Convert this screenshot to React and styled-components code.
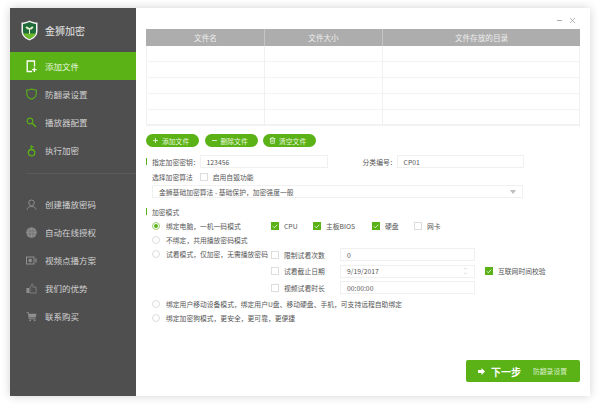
import React from 'react';
import styled, { createGlobalStyle } from 'styled-components';
import { Check, ChevronDown, ChevronUp, Minus, Plus, Trash2, X } from 'lucide-react';

const green = '#5ab217';
const font = '"Noto Sans CJK SC", "Liberation Sans", sans-serif';

const GlobalStyle = createGlobalStyle`
  html, body { margin: 0; padding: 0; background: #fff; }
  * { box-sizing: border-box; }
  body { font-family: ${font}; color: #555; }
`;

const Page = styled.div`
  width: 600px;
  height: 408px;
  padding: 8px 10px 12px;
  overflow: hidden;
`;

const Win = styled.div`
  display: flex;
  height: 100%;
  background: #fff;
  box-shadow: 0 0 9px rgba(0, 0, 0, 0.18);
`;

const Side = styled.aside`
  width: 126px;
  flex: none;
  background: #4f4f4f;
  display: flex;
  flex-direction: column;
`;

const Brand = styled.div`
  height: 44px;
  display: flex;
  align-items: center;
  gap: 7px;
  padding-left: 11px;
  color: #e4e4e4;
  font-size: 10px;
`;

const NavItem = styled.div`
  height: 28px;
  display: flex;
  align-items: center;
  padding-left: 16px;
  gap: 8px;
  font-size: 8.5px;
  color: ${(p) => (p.$active ? '#e9f5de' : '#d2d2d2')};
  background: ${(p) => (p.$active ? green : 'transparent')};
`;

const IconBox = styled.span`
  width: 11px;
  height: 14px;
  display: flex;
  align-items: center;
  justify-content: center;
  flex: none;
`;

const Divider = styled.div`
  height: 1px;
  margin: 9px 0 16px 16px;
  background: #5a5a5a;
`;

const Main = styled.main`
  flex: 1;
  display: flex;
  flex-direction: column;
  padding: 0 10px 14px;
  min-width: 0;
`;

const TitleBar = styled.div`
  height: 21px;
  display: flex;
  justify-content: flex-end;
  align-items: center;
  gap: 5px;
  padding: 3px 3px 0 0;
  color: #8a8a8a;
`;

const Table = styled.div`
  display: grid;
  grid-template-columns: 118px 118px 198px;
  grid-template-rows: 17px repeat(5, 16px);
  height: 96px;
  border-bottom: 1px solid #f0f0f0;
`;

const Th = styled.div`
  background: #adadad;
  color: #eee;
  font-size: 7.6px;
  display: flex;
  align-items: center;
  justify-content: center;
  border-left: 1px solid ${(p) => (p.$first ? '#adadad' : '#c4c4c4')};
`;

const Td = styled.div`
  border-left: 1px solid #f0f0f0;
  border-bottom: 1px solid #f3f3f3;
  &:nth-child(3n) { border-right: 1px solid #f0f0f0; }
`;

const Actions = styled.div`
  display: flex;
  gap: 5.5px;
  margin-top: 9px;
`;

const Pill = styled.div`
  width: 53px;
  height: 13px;
  border-radius: 7px;
  background: ${green};
  color: #eaf6df;
  font-size: 6.8px;
  display: flex;
  align-items: center;
  gap: 3px;
  padding-left: 6px;
`;

const FormRow = styled.div`
  display: flex;
  align-items: center;
  height: 13px;
  font-size: 6.8px;
  margin-top: ${(p) => p.$top || 0}px;
  padding-left: ${(p) => p.$pad || 0}px;
`;

const Mark = styled.span`
  width: 1px;
  height: 7px;
  background: ${green};
  margin-right: 5px;
  flex: none;
`;

const Label = styled.span`
  white-space: nowrap;
  margin-left: ${(p) => p.$left || 0}px;
`;

const Field = styled.div`
  height: 13px;
  border: 1px solid #f0f0f0;
  font-size: 6.8px;
  color: #555;
  display: flex;
  align-items: center;
  justify-content: space-between;
  padding: 0 6px;
  width: ${(p) => p.$w}px;
`;

const Arrow = styled.span`
  width: 0;
  height: 0;
  border-left: 3px solid transparent;
  border-right: 3px solid transparent;
  border-top: 4px solid #bdbdbd;
`;

const Spin = styled.span`
  display: flex;
  flex-direction: column;
  color: #aaa;
`;

const Box = styled.span`
  width: 8px;
  height: 8px;
  flex: none;
  margin-left: ${(p) => p.$left || 0}px;
  border: 1px solid ${(p) => (p.$on ? green : '#ddd')};
  background: ${(p) => (p.$on ? green : '#fff')};
  color: #fff;
  display: flex;
  align-items: center;
  justify-content: center;
`;

const CheckItem = styled.div`
  display: flex;
  align-items: center;
  gap: 5px;
  width: ${(p) => (p.$w ? `${p.$w}px` : 'auto')};
  margin-left: ${(p) => p.$left || 0}px;
  font-size: 6.8px;
  white-space: nowrap;
`;

const ModeGrid = styled.div`
  display: grid;
  grid-template-columns: 119px 1fr;
  padding-left: 6px;
  margin-top: 1px;
`;

const RadioList = styled.div`
  display: flex;
  flex-direction: column;
  padding-left: ${(p) => p.$pad || 0}px;
  margin-top: ${(p) => p.$top || 0}px;
`;

const RadioRow = styled.div`
  height: 14px;
  display: flex;
  align-items: center;
  gap: 6px;
  font-size: 6.8px;
  white-space: nowrap;
`;

const Radio = styled.span`
  width: 8px;
  height: 8px;
  flex: none;
  border-radius: 50%;
  border: 1px solid ${(p) => (p.$on ? '#9ccf74' : '#ddd')};
  display: flex;
  align-items: center;
  justify-content: center;
  &::after {
    content: '';
    width: 4px;
    height: 4px;
    border-radius: 50%;
    background: ${(p) => (p.$on ? green : 'transparent')};
  }
`;

const ChecksRow = styled.div`
  display: flex;
  height: 14px;
  align-items: center;
`;

const TrialGrid = styled.div`
  display: grid;
  grid-template-columns: 69px 135px auto;
  grid-auto-rows: 13px;
  row-gap: 3.5px;
  align-items: center;
  margin-top: 15px;
`;

const Footer = styled.div`
  margin-top: auto;
  display: flex;
  justify-content: flex-end;
`;

const NextButton = styled.div`
  width: 114px;
  height: 22px;
  border-radius: 2px;
  background: ${green};
  color: #fff;
  display: flex;
  align-items: center;
  gap: 6px;
  padding-left: 12px;
  font-size: 10px;
  font-weight: 700;
`;

const NextHint = styled.span`
  font-size: 6.8px;
  font-weight: 400;
  color: #d9efc6;
  margin-left: 6px;
`;

const Logo = () => (
  <svg width="17" height="21" viewBox="0 0 17 21">
    <path d="M8.5 0.5C6 2 3 2.6 0.5 2.6V11c0 5 4 8 8 9.5 4-1.5 8-4.5 8-9.5V2.6C14 2.6 11 2 8.5 0.5Z" fill="#f2f2f2" />
    <path d="M8.5 2C6.4 3.200 4 3.800 2 3.900V11c0 4 3.300 6.500 6.500 7.900C11.700 17.500 15 15 15 11V3.900C13 3.800 10.600 3.200 8.500 2Z" fill="#1f6b3a" />
    <path d="M2.300 13.500h12.400C13.800 16 11 17.900 8.500 18.900 6 17.900 3.200 16 2.300 13.500Z" fill="#6cbb2a" />
    <path d="M8.500 14V8.500M8.500 9C7.500 7.500 6.500 7 5 7c.3 1.700 1.800 2.300 3.500 2ZM8.500 9C9.500 7.500 10.500 7 12 7c-.3 1.700-1.800 2.300-3.500 2Z" fill="#e9f3d0" stroke="#e9f3d0" strokeWidth="1" />
  </svg>
);

const FileIcon = () => (
  <svg width="11" height="13" viewBox="0 0 11 13" fill="none" stroke="#fff" strokeWidth="1.300">
    <path d="M6 11.500H1.200V1h7.300v5.500" />
    <path d="M8.300 7.500v4.500M6.200 9.700h4.400" />
  </svg>
);

const ShieldIcon = () => (
  <svg width="11" height="12" viewBox="0 0 11 12" fill="none" stroke={green} strokeWidth="1.100">
    <path d="M5.500 1C4 1.700 2.500 2 .8 2v4c0 2.700 2.300 4.300 4.700 5.200C7.900 10.300 10.200 8.700 10.200 6V2C8.500 2 7 1.700 5.500 1Z" />
  </svg>
);

const SearchIcon = () => (
  <svg width="11" height="11" viewBox="0 0 11 11" fill="none" stroke={green}>
    <circle cx="4" cy="4" r="2.800" strokeWidth="1.200" />
    <path d="M6.300 6.300l3.700 3.700" strokeWidth="1.600" />
  </svg>
);

const KeyIcon = () => (
  <svg width="9" height="13" viewBox="0 0 9 13" fill="none" stroke={green} strokeWidth="1.300">
    <circle cx="4.500" cy="8.700" r="3.200" />
    <path d="M4.200 5.500V1.200M4.200 3.500C5.500 3.500 6 3 6 2" />
  </svg>
);

const NextArrow = () => (
  <svg width="7" height="7" viewBox="0 0 7 7" fill="#fff">
    <path d="M0 2h3.500V0L7 3.500 3.500 7V5H0Z" />
  </svg>
);

const grey = '#8f8f8f';

const UserIcon = () => (
  <svg width="11" height="11" viewBox="0 0 11 11" fill="none" stroke={grey}>
    <circle cx="5.500" cy="3.800" r="2.800" />
    <path d="M1 10.500c.5-2 2-3 4.500-3s4 1 4.500 3" />
  </svg>
);

const GlobeIcon = () => (
  <svg width="11" height="11" viewBox="0 0 11 11">
    <circle cx="5.500" cy="5.500" r="5.200" fill={grey} />
    <path d="M1 4h9M1 7h9M4 1v9M7 1v9" stroke="#6a6a6a" strokeWidth="0.600" />
  </svg>
);

const CameraIcon = () => (
  <svg width="11" height="9" viewBox="0 0 11 9" fill="none" stroke={grey}>
    <rect x="0.500" y="1" width="7.500" height="7" />
    <circle cx="4.200" cy="4.500" r="1.400" fill={grey} />
    <path d="M10 2.500v4" strokeWidth="1.200" />
  </svg>
);

const ThumbIcon = () => (
  <svg width="12" height="12" viewBox="0 0 12 12">
    <rect x="0.500" y="6" width="3" height="5.500" fill={grey} />
    <path d="M4.300 6L6.500 1.500c1.200 0 1.300 1 1 3.500h3.500v6.500H4.300Z" fill="none" stroke={grey} strokeWidth="0.800" />
  </svg>
);

const CartIcon = () => (
  <svg width="12" height="11" viewBox="0 0 12 11">
    <path d="M.5 1H2.500L3.500 8H10.500" fill="none" stroke={grey} />
    <path d="M3 2.500H11.500L10.500 6.500H3.500Z" fill={grey} />
    <circle cx="4.500" cy="9.700" r="1" fill={grey} />
    <circle cx="9.500" cy="9.700" r="1" fill={grey} />
  </svg>
);

const topNav = [
  { icon: <FileIcon />, label: '添加文件', active: true },
  { icon: <ShieldIcon />, label: '防翻录设置' },
  { icon: <SearchIcon />, label: '播放器配置' },
  { icon: <KeyIcon />, label: '执行加密' },
];

const bottomNav = [
  { icon: <UserIcon />, label: '创建播放密码' },
  { icon: <GlobeIcon />, label: '自动在线授权' },
  { icon: <CameraIcon />, label: '视频点播方案' },
  { icon: <ThumbIcon />, label: '我们的优势' },
  { icon: <CartIcon />, label: '联系购买' },
];

const headers = ['文件名', '文件大小', '文件存放的目录'];
const rows = [0, 1, 2, 3, 4];

const hardware = [
  { label: 'CPU', on: true, w: 42 },
  { label: '主板BIOS', on: true, w: 59 },
  { label: '硬盘', on: true, w: 42 },
  { label: '网卡', on: false, w: 30 },
];

const Tick = () => <Check size={7} strokeWidth={3} />;

function App() {
  return (
    <Page>
      <GlobalStyle />
      <Win>
        <Side>
          <Brand>
            <Logo />
            金狮加密
          </Brand>
          {topNav.map((n) => (
            <NavItem key={n.label} $active={n.active}>
              <IconBox>{n.icon}</IconBox>
              {n.label}
            </NavItem>
          ))}
          <Divider />
          {bottomNav.map((n) => (
            <NavItem key={n.label}>
              <IconBox>{n.icon}</IconBox>
              {n.label}
            </NavItem>
          ))}
        </Side>
        <Main>
          <TitleBar>
            <Minus size={7} strokeWidth={2.5} />
            <X size={9} strokeWidth={1.5} />
          </TitleBar>
          <Table>
            {headers.map((h, i) => (
              <Th key={h} $first={i === 0}>{h}</Th>
            ))}
            {rows.map((r) => headers.map((h) => <Td key={r + h} />))}
          </Table>
          <Actions>
            <Pill><Plus size={7} strokeWidth={3} />添加文件</Pill>
            <Pill><Minus size={7} strokeWidth={3} />删除文件</Pill>
            <Pill><Trash2 size={7} strokeWidth={2.5} />清空文件</Pill>
          </Actions>
          <FormRow $top={8}>
            <Mark />
            <Label>指定加密密钥：</Label>
            <Field $w={128}>123456</Field>
            <Label $left={35}>分类编号：</Label>
            <Field $w={127}>CP01</Field>
          </FormRow>
          <FormRow $top={2} $pad={6}>
            <Label>选择加密算法</Label>
            <Box $left={7} />
            <Label $left={5}>启用自毁功能</Label>
          </FormRow>
          <FormRow $top={2} $pad={6}>
            <Field $w={371}>
              金狮基础加密算法 - 基础保护，加密强度一般
              <Arrow />
            </Field>
          </FormRow>
          <FormRow $top={7}>
            <Mark />
            <Label>加密模式</Label>
          </FormRow>
          <ModeGrid>
            <RadioList>
              <RadioRow><Radio $on />绑定电脑，一机一码模式</RadioRow>
              <RadioRow><Radio />不绑定，共用播放密码模式</RadioRow>
              <RadioRow><Radio />试看模式，仅加密，无需播放密码</RadioRow>
            </RadioList>
            <div>
              <ChecksRow>
                {hardware.map((c) => (
                  <CheckItem key={c.label} $w={c.w}>
                    <Box $on={c.on}>{c.on && <Tick />}</Box>
                    {c.label}
                  </CheckItem>
                ))}
              </ChecksRow>
              <TrialGrid>
                <CheckItem><Box />限制试看次数</CheckItem>
                <Field $w={135}>0</Field>
                <span />
                <CheckItem><Box />试看截止日期</CheckItem>
                <Field $w={135}>
                  9/19/2017
                  <Spin><ChevronUp size={5} /><ChevronDown size={5} /></Spin>
                </Field>
                <CheckItem $left={10}><Box $on><Tick /></Box>互联网时间校验</CheckItem>
                <CheckItem><Box />视频试看时长</CheckItem>
                <Field $w={135}>00:00:00</Field>
                <span />
              </TrialGrid>
            </div>
          </ModeGrid>
          <RadioList $pad={6} $top={3}>
            <RadioRow><Radio />绑定用户移动设备模式，绑定用户U盘、移动硬盘、手机，可支持远程自助绑定</RadioRow>
            <RadioRow><Radio />绑定加密狗模式，更安全，更可靠，更便捷</RadioRow>
          </RadioList>
          <Footer>
            <NextButton>
              <NextArrow />
              下一步
              <NextHint>防翻录设置</NextHint>
            </NextButton>
          </Footer>
        </Main>
      </Win>
    </Page>
  );
}

export default App;
